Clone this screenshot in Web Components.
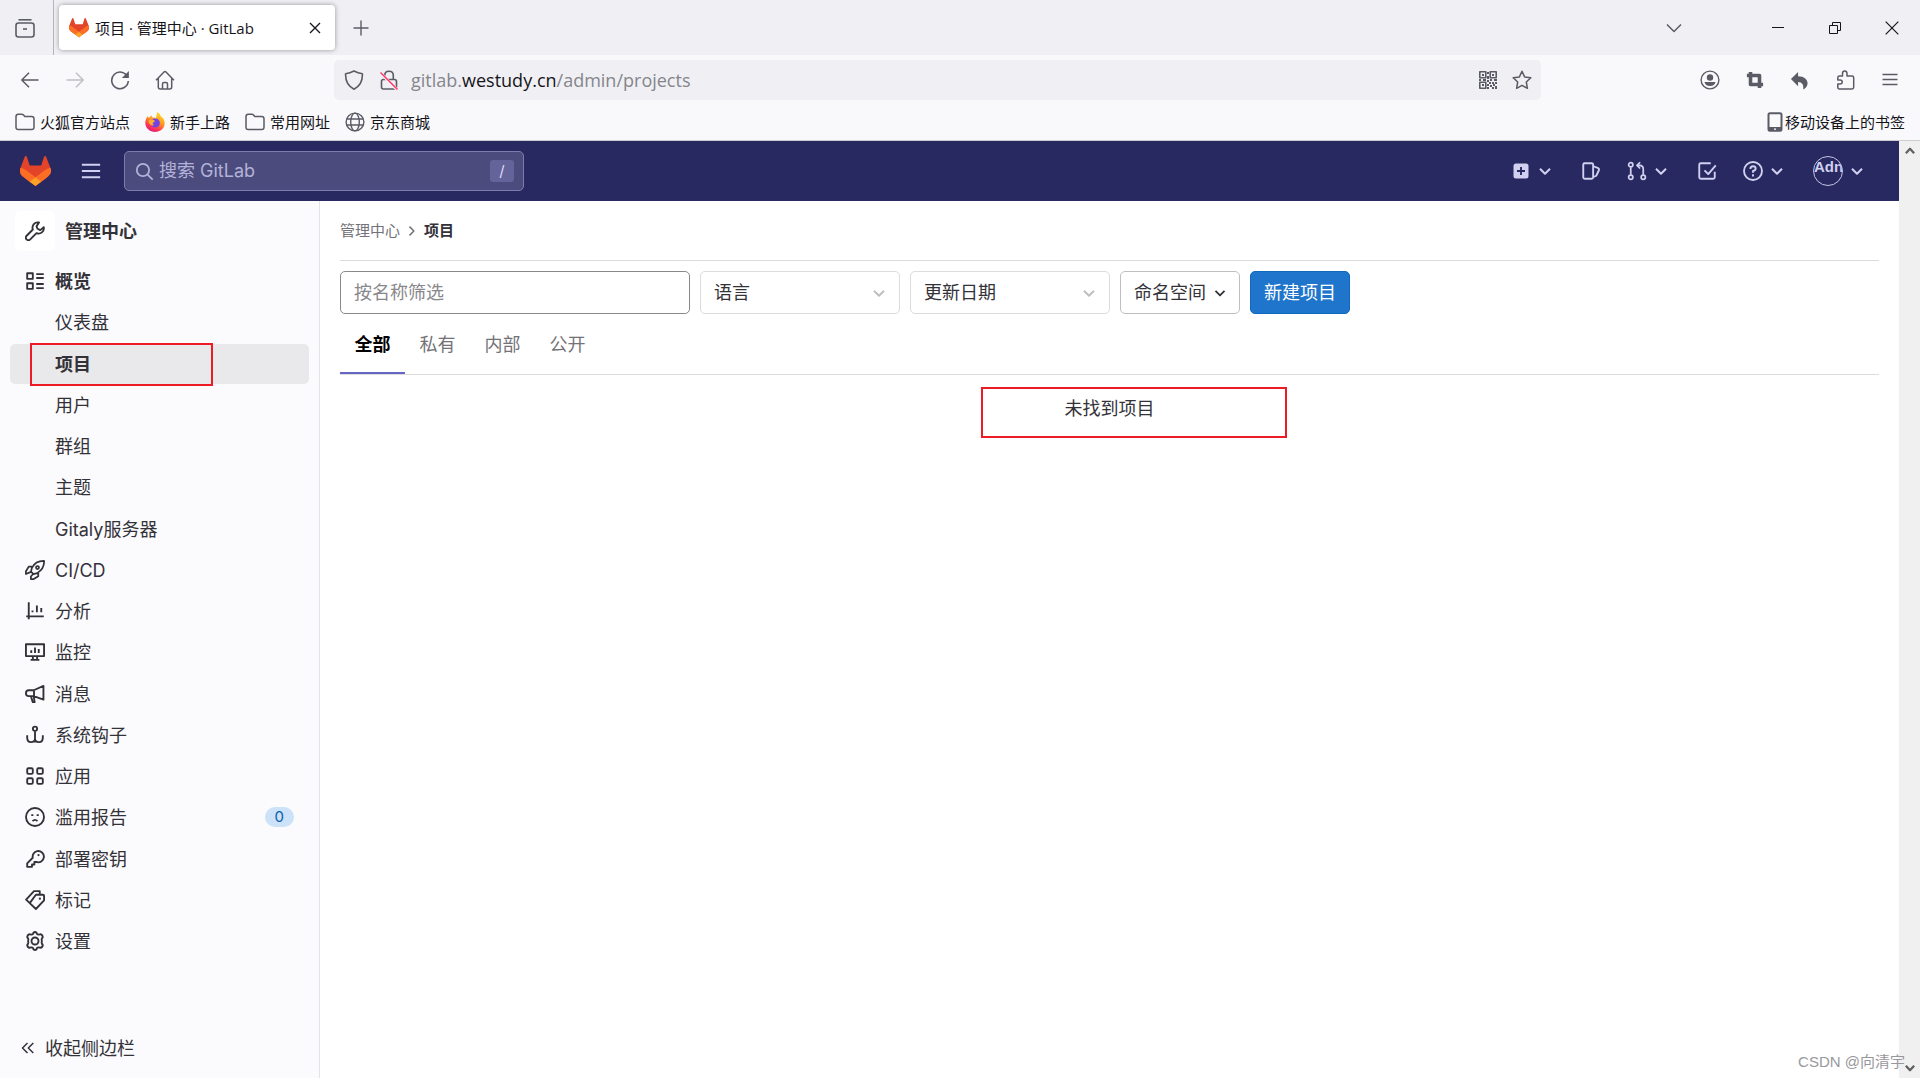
<!DOCTYPE html>
<html lang="zh-CN">
<head>
<meta charset="utf-8">
<title>项目 · 管理中心 · GitLab</title>
<style>
html, body { margin: 0; height: 100%; overflow: hidden; }
body {
  --ui: "Open Sans", "Noto Sans CJK SC", sans-serif;
  --app: "Inter", "Noto Sans CJK SC", sans-serif;
  --ink: #333238;
  font: 15px/20px var(--ui);
  color: #15141a;
  background: #fff;
}
</style>
</head>
<body>
<browser-window></browser-window>

<script>
const ICONS = {
  view: [20, `<path d="M3.5 1.8h13" /><rect x="1" y="5" width="18" height="14" rx="2.5"/><path d="M8 11h4"/>`, 1.6],
  close: [12, `<path d="M1 1l10 10M11 1L1 11"/>`, 1.3],
  plus: [16, `<path d="M8 .5v15M.5 8h15"/>`, 1.4],
  down: [16, `<path d="M1 4.5l7 7 7-7"/>`, 1.5],
  min: [12, `<path d="M0 5.5h12"/>`, 1],
  restore: [12, `<path d="M.5 3.5h8v8h-8zM3.5 3.5v-3h8v8h-3"/>`, 1],
  winclose: [14, `<path d="M.7 .7l12.6 12.6M13.3 .7L.7 13.3"/>`, 1.2],
  back: [20, `<path d="M18.5 10H2M9 2.8L1.8 10 9 17.2"/>`, 1.5],
  forward: [20, `<path d="M1.500 10H18M11 2.800L18.200 10 11 17.200"/>`, 1.5],
  reload: [20, `<path d="M17.6 7A8.3 8.300 0 1 0 18.300 11"/><path d="M18.900 1v7h-7z" fill="currentColor" stroke="none"/>`, 1.6],
  home: [20, `<path d="M1 10.200L9 2q1-1 2 0l8 8.200M3.300 8.500V17q0 2 2 2h9.400q2 0 2-2V8.500M7.500 19v-5q0-1.500 1.500-1.500h2q1.500 0 1.500 1.500v5"/>`, 1.5],
  shield: [20, `<path d="M10 1Q6 3.200 1.600 3.700C1.300 10.500 3.500 16 10 19.200C16.500 16 18.700 10.500 18.400 3.700Q14 3.200 10 1z"/>`, 1.6],
  lock: [20, `<path d="M5.700 9V5.500Q5.700 1.300 10 1.300T14.300 5.500V9M4.500 9.500h11q2 0 2 2v5.500q0 2-2 2h-11q-2 0-2-2v-5.500q0-2 2-2"/><path d="M1.500 3L18.500 20" stroke="#f9f9fb" stroke-width="3"/><path d="M1.500 2.500L18.500 19.500" stroke="#ff3b6b"/>`, 1.6],
  qr: [18, `<path d="M.8 .8h6v6h-6zM11.200 .8h6v6h-6zM.8 11.200h6v6h-6z"/><path fill="currentColor" stroke="none" d="M3 3h2v2H3zM13 3h2v2h-2zM3 13h2v2H3zM8 1h2v2H8zM8 5h2v3H8zM0 8h2v2H0zM4 8h3v2H4zM8 9h2v2H8zM11 8h2v2h-2zM15 8h3v2h-3zM8 13h2v2H8zM10 11h2v2h-2zM13 11h2v2h-2zM16 11h2v2h-2zM11 14h2v2h-2zM14 13h2v2h-2zM8 16h2v2H8zM13 16h2v2h-2zM16 15h2v3h-2z"/>`, 1.6],
  star: [20, `<path d="M10 1.300l2.600 5.600 6.200.800-4.500 4.300 1.100 6.300L10 15.300 4.600 18.300l1.100-6.300L1.200 7.700l6.200-.800z"/>`, 1.5],
  account: [20, `<circle cx="10" cy="10" r="8.900"/><circle cx="10" cy="7.500" r="3.200" fill="currentColor" stroke="none"/><path d="M4.500 12h11q-.800 4-5.500 4t-5.500-4z" fill="currentColor" stroke="none"/>`, 1.4],
  crop: [20, `<path d="M1 5h14v14M19 15H5V1"/>`, 4],
  undo: [20, `<path fill="currentColor" stroke="none" d="M8.500 1v4.500C15 5.500 18.500 9 18.500 13q0 4-4.500 6.500 1-8-5.500-8V16L1 8.500z"/>`, 1],
  puzzle: [20, `<path d="M7.500 6V3.500Q7.500 1 9.700 1T12 3.500V6h5q1.700 0 1.700 1.700v9.600q0 1.700-1.700 1.700H4.500q-1.700 0-1.700-1.700V14h2.200q2.200 0 2.200-2T5 10H2.800V7.700Q2.800 6 4.500 6z"/>`, 1.5],
  menu: [20, `<path d="M2.500 4.500h15M2.500 9.500h15M2.500 14.500h15"/>`, 1.4],
  folder: [20, `<path d="M1 4.500q0-2.300 2.300-2.300h3.500q1 0 1.700.800l1.300 1.500h6.900q2.300 0 2.300 2.300v8.400q0 2.300-2.300 2.300H3.300Q1 17.500 1 15.200z"/>`, 1.5],
  globe: [20, `<circle cx="10" cy="10" r="8.900"/><ellipse cx="10" cy="10" rx="4.300" ry="8.900"/><path d="M1.800 7h16.400M1.800 13h16.400"/>`, 1.4],
  mobile: [20, `<rect x="3.500" y="1.300" width="13" height="17.500" rx="1.500"/><path d="M4 16.500h12" stroke-width="3"/><path d="M9 17.200h2" stroke="#fff" stroke-width="1.200"/>`, 2],
  firefox: [20, `<defs><linearGradient id="f" x1=".8" y1="0" x2=".3" y2="1"><stop offset="0" stop-color="#ffe226"/><stop offset=".45" stop-color="#ff9a1f"/><stop offset=".75" stop-color="#ff3a4e"/><stop offset="1" stop-color="#e31587"/></linearGradient></defs><path fill="url(#f)" stroke="none" d="M12.500 0c2 1.300 2.600 2.600 3.300 4.200 2.300 1.300 3.900 4 3.900 7C19.700 16 15.300 20 10 20S.3 16 .3 10.800C.3 8 1.400 5.500 3 4c.1 1 .6 1.600 1.100 2C4.600 5 5.500 4 6.800 3.500c-.1.800.1 1.600.6 2.100 1.500-.3 2.400-.2 3.500.4 .8-1.700.7-4 1.600-6z"/><circle cx="10.300" cy="11" r="4.600" fill="#7542e5" stroke="none"/><path fill="#ffb02e" stroke="none" d="M3.500 8.500c2-1.500 4.500-1.500 6.500.5l-1.500 1.600c-1.500.6-1 2 .8 2.400-3 1.500-5.800-1-5.800-4.500z"/>`, 1],
  gitlab: [25, `<g stroke="none"><path fill="#E24329" d="m24.507 9.500-.034-.09L21.082.562a.896.896 0 0 0-1.694.091l-2.290 7.010H7.825L5.535.653a.898.898 0 0 0-1.694-.09L.451 9.411.416 9.500a6.297 6.297 0 0 0 2.090 7.278l.012.010.030.022 5.160 3.867 2.560 1.935 1.554 1.176a1.051 1.051 0 0 0 1.268 0l1.555-1.176 2.560-1.935 5.197-3.890.014-.010A6.297 6.297 0 0 0 24.507 9.500Z"/><path fill="#FC6D26" d="m24.507 9.500-.034-.09a11.440 11.440 0 0 0-4.560 2.051l-7.447 5.632 4.742 3.584 5.197-3.890.014-.010A6.297 6.297 0 0 0 24.507 9.500ZM5.010 11.461a11.430 11.430 0 0 0-4.560-2.050L.416 9.500a6.297 6.297 0 0 0 2.090 7.278l.012.010.030.022 5.160 3.867 4.745-3.584-7.444-5.632Z"/><path fill="#FCA326" d="m7.707 20.677 2.560 1.935 1.555 1.176a1.051 1.051 0 0 0 1.268 0l1.555-1.176 2.560-1.935-4.743-3.584-4.755 3.584Z"/></g>`, 1],
  burger: [16, `<path d="M.700 3h14.600M.700 8h14.600M.700 13h14.600"/>`, 1.5],
  search: [16, `<circle cx="6.700" cy="6.700" r="5.200"/><path d="M10.600 10.600l4.300 4.300"/>`, 1.5],
  chev: [16, `<path d="M4 6.200l4 4 4-4"/>`, 1.6],
  right: [16, `<path d="M6 4.500l3.500 3.500L6 11.500"/>`, 1.2],
  plussq: [16, `<path fill="currentColor" stroke="none" fill-rule="evenodd" d="M4 2h8a2 2 0 0 1 2 2v8a2 2 0 0 1-2 2H4a2 2 0 0 1-2-2V4a2 2 0 0 1 2-2zM7.250 4.800v2.450H4.800v1.500h2.450v2.450h1.500V8.750h2.450v-1.500H8.750V4.800z"/>`, 1],
  issues: [16, `<path d="M2.500 1.800h6q1.200 0 1.200 1.200v10q0 1.200-1.200 1.200h-5.500q-1.200 0-1.200-1.200V3q0-1.200 1.200-1.200zM10 4.200l3.700 1.500q1 .500.700 1.500l-2.200 4.600-2.200 1"/>`, 1.5],
  merge: [16, `<circle cx="3" cy="3" r="1.700"/><circle cx="3" cy="13" r="1.700"/><circle cx="13" cy="13" r="1.700"/><path d="M3 5v6M13 11V6.500Q13 3.500 10 3.500H8.500M10.500 1L8 3.500 10.500 6"/>`, 1.4],
  todo: [16, `<path d="M14.200 8.500V13q0 1.200-1.200 1.200H3q-1.200 0-1.200-1.200V3Q1.800 1.800 3 1.800h8M6 7.500l3 3L15 3.500"/>`, 1.5],
  help: [16, `<circle cx="8" cy="8" r="7.200"/><path d="M5.900 6.300q0-2.100 2.100-2.100t2.100 1.900Q10.100 7.300 8 8v1.400M8 10.600v1.700"/>`, 1.5],
  wrench: [16, `<path d="M11.200 1.200A4.200 4.200 0 0 0 6.300 6.800L1.300 11.800a1.700 1.700 0 0 0 2.900 2.900L9.200 9.700A4.200 4.200 0 0 0 15 5L12.200 7.300 10 6.200 9.200 4.300z"/>`, 1.5],
  overview: [16, `<path d="M1.750 1.750h4.500v4.500h-4.500zM1.750 9.750h4.500v4.500h-4.500zM9 2.500h6M9 5.600h6M9 10.400h6M9 13.700h6"/>`, 1.5],
  rocket: [16, `<path d="M15.250.750Q8.500.600 5.500 6.300L4.800 9.300l2 2 3-.800Q15.600 7 15.250.750zM5.500 5.300H3L.750 9v2.200l4-1.700M10.600 10.400V13l-3.600 2.250H4.700L4.700 13.200l1.800-2"/><circle cx="10" cy="6" r="1.200"/>`, 1.4],
  chart: [16, `<path d="M3 1v13.500M1 12.250h14M6 9V7.500M9.500 9V3.500M13 9V5.500"/>`, 1.5],
  monitor: [16, `<path d="M.750 1.750h14.500v9.500H.750zM4.500 14.250h7M6.300 11.500v2.500M9.700 11.500v2.500M5 8.700V6.500M8 8.700V4.300M11 8.700V5.500"/>`, 1.5],
  horn: [16, `<path d="M14.750 1.500v11L7 9.700H3Q.750 9.700 .750 7.400T3 5h4zM7.200 5V9.700M4.800 10l1.400 4.500h1.500l-.700-4.400"/>`, 1.5],
  hook: [16, `<circle cx="8" cy="3" r="1.700"/><path d="M8 5v9M1.750 8.200V10Q1.750 13.700 4.700 13.700 8 13.700 8 11 8 13.700 11.300 13.700q2.950 0 2.950-3.700V8.200"/>`, 1.5],
  grid: [16, `<rect x="1.750" y="1.750" width="4.500" height="4.500" rx="1"/><rect x="9.750" y="1.750" width="4.500" height="4.500" rx="1"/><rect x="1.750" y="9.750" width="4.500" height="4.500" rx="1"/><rect x="9.750" y="9.750" width="4.500" height="4.500" rx="1"/>`, 1.5],
  sad: [16, `<circle cx="8" cy="8" r="7.200"/><path d="M6 11.300q2-2 4 0M5 6.500h1.700M9.300 6.500H11"/>`, 1.5],
  key: [16, `<path d="M9.700 1.750a4.500 4.500 0 1 1-.700 8.600H7.500v2H5.600v1.900H1.750v-2.800L6.200 7A4.500 4.500 0 0 1 9.700 1.750z"/><circle cx="10.800" cy="4.800" r=".9" fill="currentColor" stroke="none"/>`, 1.5],
  tag: [16, `<path d="M8.700 3.750h5.600q.950 0 .950.900v3.600L8.700 15.200 3.800 10.500zM3.800 10.500L.900 7.700 7.200.900h4.600V3.500"/><circle cx="11.900" cy="6.900" r=".9" fill="currentColor" stroke="none"/>`, 1.5],
  gear: [16, `<path d="M6.500 2.300Q6.700.750 8 .750T9.500 2.300q.800.800 1.900.500 1.500-.700 2.400.700.900 1.500-.300 2.400-.400 1.100 0 2.100v.200q-.400 1 0 2 1.200.900.300 2.300-.900 1.400-2.400.700-1.100-.300-1.900.500-.200 1.550-1.500 1.550t-1.500-1.550q-.800-.800-1.900-.500-1.500.700-2.400-.700-.900-1.400.300-2.300.400-1 0-2V8q.400-1 0-2.100-1.200-.900-.300-2.400.9-1.400 2.400-.700 1.100.300 1.900-.500z"/><circle cx="8" cy="8" r="2.800"/>`, 1.5],
  collapse: [16, `<path d="M7.500 3L2.500 8l5 5M13.300 3l-5 5 5 5"/>`, 1.5],
  scrollup: [16, `<path d="M2.500 11L8 5l5.500 6"/>`, 3],
  scrolldown: [16, `<path d="M2.500 5L8 11l5.500-6"/>`, 3]
};

function define(name, html, setup) {
  const template = document.createElement('template');
  template.innerHTML = html;
  customElements.define(name, class extends HTMLElement {
    constructor() {
      super();
      this.attachShadow({ mode: 'open' }).append(template.content.cloneNode(true));
    }
    connectedCallback() { if (setup) setup(this, this.shadowRoot); }
  });
}

const RESET = `
  *, ::before, ::after { box-sizing: border-box; }
  button, input, select { font: inherit; color: inherit; margin: 0; padding: 0; border: 0; background: none; outline: 0; }
  button { display: flex; align-items: center; justify-content: center; cursor: pointer; }
  a { color: inherit; text-decoration: none; }`;

/* Line icon: <ui-icon name="home" size="20"> */
define('ui-icon', `<style>:host { display: block; flex: none; line-height: 0; }</style><span></span>`, (el, root) => {
  const [box, body, width] = ICONS[el.getAttribute('name')];
  const size = el.getAttribute('size') || 20;
  root.querySelector('span').innerHTML =
    `<svg width="${size}" height="${size}" viewBox="0 0 ${box} ${box}" fill="none" stroke="currentColor" stroke-width="${width}" stroke-linejoin="round" aria-hidden="true">${body}</svg>`;
});

/* Puts the icon named by the host's "icon" attribute first in its link */
function prependIcon(el, root) {
  const name = el.getAttribute('icon');
  if (!name || root.querySelector('ui-icon')) return;
  const icon = document.createElement('ui-icon');
  icon.setAttribute('name', name);
  root.querySelector('a').prepend(icon);
}

/* Red outline laid over part of its parent */
define('mark-frame', `<style>:host { display: block; position: absolute; box-sizing: border-box; border: 2px solid #ed1c24; pointer-events: none; }</style>`);

define('browser-tabs', `<style>${RESET}
  :host { display: flex; align-items: center; height: 55px; background: #f0f0f4; color: #5b5b66; }
  .view { width: 54px; height: 55px; border-right: 1px solid #b5b5bd; padding-right: 3px; }
  .tab { display: flex; align-items: center; width: 276px; height: 45px; margin-left: 5px; padding: 0 14px 0 10px; border-radius: 4px; background: #fff; box-shadow: 0 0 5px rgba(0,0,0,.38); color: #15141a; }
  .tab a { flex: 1; margin-left: 6px; white-space: nowrap; }
  .new { width: 52px; height: 45px; }
  .all { width: 40px; height: 45px; margin: 0 55px 0 auto; }
  .win { width: 57px; height: 55px; color: #15141a; }
</style>
<button class="view" aria-label="Firefox View"><ui-icon name="view"></ui-icon></button>
<div class="tab"><ui-icon name="gitlab"></ui-icon><a href="#">项目 · 管理中心 · GitLab</a><button aria-label="关闭标签页"><ui-icon name="close" size="12"></ui-icon></button></div>
<button class="new" aria-label="新建标签页"><ui-icon name="plus" size="16"></ui-icon></button>
<button class="all" aria-label="列出所有标签页"><ui-icon name="down" size="16"></ui-icon></button>
<button class="win" aria-label="最小化"><ui-icon name="min" size="12"></ui-icon></button>
<button class="win" aria-label="还原"><ui-icon name="restore" size="12"></ui-icon></button>
<button class="win" aria-label="关闭"><ui-icon name="winclose" size="14"></ui-icon></button>`);

define('browser-toolbar', `<style>${RESET}
  :host { display: flex; align-items: center; height: 50px; padding: 0 8px 0 7px; background: #f9f9fb; color: #5b5b66; }
  .tool { width: 45px; height: 40px; }
  .off { color: #bfbfc6; }
  .url { flex: 1; display: flex; align-items: center; gap: 15px; height: 40px; margin: 0 146px 0 147px; padding: 0 9px 0 10px; border-radius: 5px; background: #f0f0f4; }
  .address { flex: 1; font-size: 18px; line-height: 24px; margin-left: -3px; color: #85858c; white-space: nowrap; }
  b { font-weight: 400; color: #15141a; }
</style>
<button class="tool" aria-label="后退"><ui-icon name="back"></ui-icon></button>
<button class="tool off" aria-label="前进"><ui-icon name="forward"></ui-icon></button>
<button class="tool" aria-label="刷新"><ui-icon name="reload"></ui-icon></button>
<button class="tool" aria-label="主页"><ui-icon name="home"></ui-icon></button>
<div class="url">
  <ui-icon name="shield"></ui-icon><ui-icon name="lock"></ui-icon>
  <div class="address">gitlab.<b>westudy.cn</b>/admin/projects</div>
  <button aria-label="二维码"><ui-icon name="qr" size="18"></ui-icon></button>
  <button aria-label="收藏"><ui-icon name="star"></ui-icon></button>
</div>
<button class="tool" aria-label="账户"><ui-icon name="account"></ui-icon></button>
<button class="tool" aria-label="截图"><ui-icon name="crop" size="18"></ui-icon></button>
<button class="tool" aria-label="撤销"><ui-icon name="undo" size="19"></ui-icon></button>
<button class="tool" aria-label="扩展"><ui-icon name="puzzle"></ui-icon></button>
<button class="tool" aria-label="菜单"><ui-icon name="menu"></ui-icon></button>`);

define('bookmark-link', `<style>${RESET}
  :host { display: block; }
  a { display: flex; align-items: center; gap: 5px; color: #15141a; white-space: nowrap; }
  ui-icon { color: #5b5b66; }
  :host([tight]) a { gap: 0; }
</style><a href="#"><slot></slot></a>`, prependIcon);

define('bookmark-bar', `<style>
  :host { display: flex; align-items: center; gap: 15px; box-sizing: border-box; height: 36px; padding: 0 15px 2px; background: #f9f9fb; border-bottom: 1px solid #ccccd0; }
  .end { margin-left: auto; }
</style>
<bookmark-link icon="folder">火狐官方站点</bookmark-link>
<bookmark-link icon="firefox">新手上路</bookmark-link>
<bookmark-link icon="folder">常用网址</bookmark-link>
<bookmark-link icon="globe">京东商城</bookmark-link>
<bookmark-link class="end" icon="mobile" tight>移动设备上的书签</bookmark-link>`);

define('app-navbar', `<style>${RESET}
  :host { display: flex; align-items: center; height: 60px; padding: 0 32px 0 20px; background: #292961; color: #d1d0f0; font: 18px/24px var(--app); }
  .burger { margin: 0 23px 0 30px; }
  .search { display: flex; align-items: center; gap: 5px; width: 400px; height: 40px; padding: 0 9px 0 10px; border: 1px solid #7d7cab; border-radius: 5px; background: #4c4b7d; color: #b3b2d8; }
  .search input { flex: 1; min-width: 0; }
  .search input::placeholder { color: #b3b2d8; opacity: 1; }
  kbd { width: 24px; height: 22px; border-radius: 3px; background: #64639a; color: #dddcf5; font: 15px/22px var(--app); text-align: center; }
  nav { display: flex; align-items: center; gap: 26px; margin-left: auto; }
  nav button { gap: 4px; }
  .avatar { width: 30px; height: 30px; border: 1px solid #c5c4e6; border-radius: 50%; overflow: hidden; font: 700 15px/20px "Liberation Sans", sans-serif; text-align: center; }
</style>
<a href="#" aria-label="GitLab"><ui-icon name="gitlab" size="31"></ui-icon></a>
<button class="burger" aria-label="菜单"><ui-icon name="burger"></ui-icon></button>
<label class="search"><ui-icon name="search" size="19"></ui-icon><input type="text" placeholder="搜索 GitLab" aria-label="搜索 GitLab"><kbd>/</kbd></label>
<nav>
  <button aria-label="新建"><ui-icon name="plussq"></ui-icon><ui-icon name="chev"></ui-icon></button>
  <button aria-label="议题"><ui-icon name="issues"></ui-icon></button>
  <button aria-label="合并请求"><ui-icon name="merge"></ui-icon><ui-icon name="chev"></ui-icon></button>
  <button aria-label="待办事项"><ui-icon name="todo"></ui-icon></button>
  <button aria-label="帮助"><ui-icon name="help"></ui-icon><ui-icon name="chev"></ui-icon></button>
  <button aria-label="用户"><span class="avatar">Adn</span><ui-icon name="chev"></ui-icon></button>
</nav>`);

define('side-item', `<style>${RESET}
  :host { display: block; position: relative; }
  a { display: flex; align-items: center; gap: 10px; height: 40px; padding: 0 15px; border-radius: 5px; color: var(--ink); white-space: nowrap; }
  .text { flex: 1; padding-top: 2px; }
  :host([sub]) a { padding-left: 45px; }
  :host([strong]) a { font-weight: 700; }
  :host([active]) a { background: #e9e9eb; }
</style><a href="#"><span class="text"><slot></slot></span><slot name="badge"></slot></a><slot name="mark"></slot>`, prependIcon);

define('app-sidebar', `<style>${RESET}
  :host { display: flex; flex-direction: column; box-sizing: border-box; width: 320px; padding: 10px 10px 0; background: #fbfafd; border-right: 1px solid #e4e3e8; color: var(--ink); font: 18px/24px var(--app); }
  .context { display: flex; align-items: center; gap: 10px; height: 40px; margin: 0 5px 10px; font-weight: 700; }
  .context .text, .toggle .text { padding-top: 2px; }
  .box { display: grid; place-items: center; width: 40px; height: 40px; border-radius: 5px; background: #fff; }
  nav { flex: 1; display: flex; flex-direction: column; justify-content: space-between; padding-bottom: 57px; }
  .badge { padding: 0 10px; border-radius: 10px; background: #cbe2f9; color: #0b5cad; font: 15px/20px var(--app); }
  .toggle { height: 60px; justify-content: flex-start; gap: 9px; padding-left: 10px; }
  mark-frame { left: 20px; top: -1px; width: 183px; height: 43px; }
</style>
<a class="context" href="#"><span class="box"><ui-icon name="wrench"></ui-icon></span><span class="text">管理中心</span></a>
<nav>
  <side-item icon="overview" strong>概览</side-item>
  <side-item sub>仪表盘</side-item>
  <side-item sub strong active>项目<mark-frame slot="mark"></mark-frame></side-item>
  <side-item sub>用户</side-item>
  <side-item sub>群组</side-item>
  <side-item sub>主题</side-item>
  <side-item sub>Gitaly服务器</side-item>
  <side-item icon="rocket">CI/CD</side-item>
  <side-item icon="chart">分析</side-item>
  <side-item icon="monitor">监控</side-item>
  <side-item icon="horn">消息</side-item>
  <side-item icon="hook">系统钩子</side-item>
  <side-item icon="grid">应用</side-item>
  <side-item icon="sad">滥用报告<span slot="badge" class="badge">0</span></side-item>
  <side-item icon="key">部署密钥</side-item>
  <side-item icon="tag">标记</side-item>
  <side-item icon="gear">设置</side-item>
</nav>
<button class="toggle"><ui-icon name="collapse" size="16"></ui-icon><span class="text">收起侧边栏</span></button>`);

define('select-box', `<style>${RESET}
  :host { display: grid; width: 200px; align-items: center; }
  select, ui-icon { grid-area: 1 / 1; }
  select { width: 100%; height: 43px; padding: 0 40px 0 13px; border: 1px solid #dcdcde; border-radius: 5px; background: #fff; appearance: none; }
  ui-icon { justify-self: end; margin-right: 11px; color: #bfbfc3; pointer-events: none; }
</style><select><option></option></select><ui-icon name="chev"></ui-icon>`, (el, root) => {
  root.querySelector('option').textContent = el.getAttribute('value');
  root.querySelector('select').setAttribute('aria-label', el.getAttribute('value'));
});

define('projects-page', `<style>${RESET}
  :host { display: block; padding: 0 20px; color: var(--ink); font: 18px/24px var(--app); }
  .crumbs { display: flex; align-items: center; gap: 2px; height: 60px; border-bottom: 1px solid #dcdcde; font-size: 15px; line-height: 20px; color: #737278; }
  .crumbs b { color: var(--ink); }
  .filters { display: flex; gap: 10px; padding-top: 10px; }
  .filters input { width: 350px; height: 43px; padding: 0 13px; border: 1px solid #89888d; border-radius: 5px; }
  input::placeholder { color: #89888d; opacity: 1; }
  .ns { width: 120px; height: 43px; gap: 5px; padding-left: 3px; border: 1px solid #bfbfc3; border-radius: 5px; }
  .new { width: 100px; height: 43px; border: 1px solid #1068bf; border-radius: 5px; background: #1f75cb; color: #fff; }
  .tabs { display: flex; height: 61px; border-bottom: 1px solid #dcdcde; }
  .tabs a { width: 65px; height: 60px; padding-top: 19px; text-align: center; color: #737278; }
  .tabs a.on { border-bottom: 2px solid #6666c4; color: #000; font-weight: 700; }
  .empty { position: relative; padding: 22px 0; text-align: center; }
  .empty p { margin: 0; }
  mark-frame { left: calc(50% - 129px); top: 12px; width: 306px; height: 51px; }
</style>
<nav class="crumbs"><a href="#">管理中心</a><ui-icon name="right"></ui-icon><b>项目</b></nav>
<div class="filters">
  <input type="text" placeholder="按名称筛选" aria-label="按名称筛选">
  <select-box value="语言"></select-box>
  <select-box value="更新日期"></select-box>
  <button class="ns">命名空间<ui-icon name="chev" size="18"></ui-icon></button>
  <button class="new">新建项目</button>
</div>
<nav class="tabs"><a class="on" href="#">全部</a><a href="#">私有</a><a href="#">内部</a><a href="#">公开</a></nav>
<div class="empty"><p>未找到项目</p><mark-frame></mark-frame></div>`);

define('scroll-rail', `<style>
  :host { display: flex; flex-direction: column; justify-content: space-between; align-items: center; box-sizing: border-box; width: 21px; padding: 4px 0; background: #f0f0f0; color: #606060; }
</style><ui-icon name="scrollup" size="12"></ui-icon><ui-icon name="scrolldown" size="12"></ui-icon>`);

define('browser-window', `<style>
  :host { display: flex; flex-direction: column; height: 100vh; position: relative; }
  .view { flex: 1; min-height: 0; display: flex; }
  .app { flex: 1; min-width: 0; display: flex; flex-direction: column; background: #fff; }
  .body { flex: 1; min-height: 0; display: flex; }
  projects-page { flex: 1; min-width: 0; }
  .credit { position: absolute; right: 15px; bottom: 6px; color: #98989c; font: 15px/20px "Liberation Sans", "Noto Sans CJK SC", sans-serif; }
</style>
<browser-tabs></browser-tabs>
<browser-toolbar></browser-toolbar>
<bookmark-bar></bookmark-bar>
<div class="view">
  <div class="app">
    <app-navbar></app-navbar>
    <div class="body"><app-sidebar></app-sidebar><projects-page></projects-page></div>
  </div>
  <scroll-rail></scroll-rail>
</div>
<div class="credit">CSDN @向清宇</div>`);
</script>
</body>
</html>
